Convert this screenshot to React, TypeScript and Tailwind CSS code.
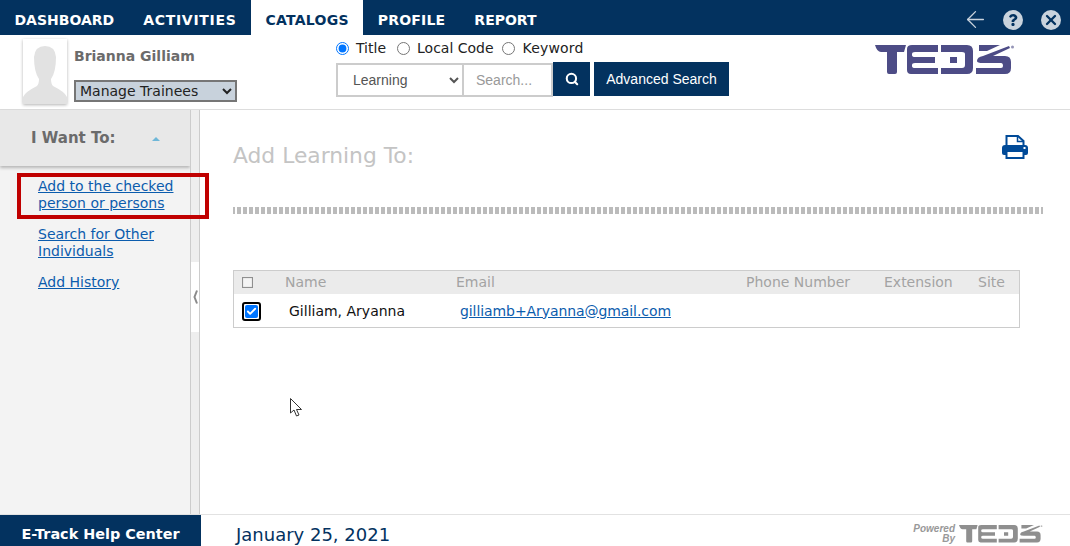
import React from 'react'
import { ArrowLeft, Check, Search, X } from 'lucide-react'
import { FaQuestion } from 'react-icons/fa'

const tabs = [
  { label: 'DASHBOARD', spacing: 'tracking-normal' },
  { label: 'ACTIVITIES', spacing: 'tracking-[0.7px]' },
  { label: 'CATALOGS', spacing: 'tracking-[0.25px]' },
  { label: 'PROFILE', spacing: 'tracking-[0.2px]' },
  { label: 'REPORT', spacing: 'tracking-normal' },
]

function TedsLogo({ className, fill }: { className: string; fill: string }) {
  return (
    <svg viewBox="0 0 140 30" className={className} fill={fill}>
      {/* T */}
      <path d="M0 0H31L29 7H22V27Q22 29 20 29H14Q12 29 12 27V7H6Q2 7 0 0Z" />
      {/* E */}
      <path d="M37 0H63V7H40Q37 7 37 9V10Q37 12 40 12H60V18H40Q37 18 37 20V21Q37 23 40 23H63V29H36Q32 29 32 25V4Q32 0 37 0Z" />
      {/* D */}
      <path d="M66 0H92Q98 0 98 6V23Q98 29 92 29H66V23H87Q90 23 90 20V9Q90 7 87 7H66ZM75 12H82V18H75Z" />
      {/* S with swoosh */}
      <path d="M102 16Q102 12 108 11L134 1L135 3L118 11H130Q136 11 136 17V23Q136 29 130 29H101V23H126Q128 23 128 21Q128 18 126 18H108Q102 18 102 16ZM104 0H125L112 6H104Z" />
      <circle cx="137.5" cy="2" r="1.5" opacity="0.6" />
    </svg>
  )
}

function PrintIcon() {
  return (
    <svg viewBox="0 0 26 24" className="mr-[15px] mt-[25px] h-[24px] w-[26px]">
      <path d="M4.5 12V1H16L21.5 6V12Z" fill="white" stroke="#004a98" strokeWidth="2" />
      <path d="M15.5 1V6.5H21.5" fill="none" stroke="#004a98" strokeWidth="1.5" />
      <path d="M3 10H23Q26 10 26 13V18Q26 20 24 20H2Q0 20 0 18V13Q0 10 3 10Z" fill="#004a98" />
      <rect x="4.5" y="16" width="17" height="7" fill="white" stroke="#004a98" strokeWidth="2" />
      <rect x="21.5" y="12" width="2" height="2" fill="white" />
    </svg>
  )
}

export default function App() {
  return (
    <div className="relative flex h-[546px] w-[1070px] flex-col overflow-hidden bg-white font-['DejaVu_Sans',sans-serif]">
      {/* Top nav */}
      <div className="flex h-[35px] shrink-0 items-stretch bg-[#03325f]">
        <div className="flex">
          {tabs.map((t) => (
            <div
              key={t.label}
              className={`flex items-center px-[14.5px] pt-[6px] text-[14px] font-bold ${t.spacing} ${
                t.label === 'CATALOGS' ? 'bg-white text-[#03325f]' : 'text-white'
              }`}
            >
              {t.label}
            </div>
          ))}
        </div>
        <div className="ml-auto flex items-center gap-[18px] pr-[9px] pt-[4px]">
          <ArrowLeft className="-mr-[4px] h-[27px] w-[27px] text-[#c9d3dd]" strokeWidth={1.2} />
          <div className="flex h-5 w-5 items-center justify-center rounded-full bg-[#c9d3dd]">
            <FaQuestion className="h-3 w-3 text-[#03325f]" />
          </div>
          <div className="flex h-5 w-5 items-center justify-center rounded-full bg-[#c9d3dd]">
            <X className="h-4 w-4 text-[#03325f]" strokeWidth={3.5} />
          </div>
        </div>
      </div>

      {/* Header */}
      <div className="flex h-[75px] shrink-0 border-b border-[#dddddd]">
        <div className="ml-[23px] mt-[4px] h-[65px] w-[44px] shrink-0 overflow-hidden bg-white shadow-[0_1px_3px_rgba(0,0,0,0.3)]">
          <svg viewBox="0 0 44 65" className="h-full w-full" fill="#e2e2e2">
            <path d="M0 65V58Q2 53 14 47Q16 45 16 40Q11 33 11 18Q12 7 22 7Q32 7 33 18Q33 33 28 40Q28 45 30 47Q42 53 44 58V65Z" />
          </svg>
        </div>
        <div className="ml-[7px] w-[163px] shrink-0">
          <div className="mt-[12px] text-[14px] font-bold leading-[18px] text-[#6b6b6b]">Brianna Gilliam</div>
          <select
            defaultValue="Manage Trainees"
            className="mt-[15px] h-[22px] w-[163px] border-2 border-[#767676] bg-[#c8d2dc] text-[14px] text-[#222222]"
          >
            <option>Manage Trainees</option>
          </select>
        </div>
        <div className="ml-[99px] w-[400px] shrink-0">
          <div className="mt-[3px] flex h-[20px] items-center text-[14px] text-[#222222]">
            <input type="radio" name="scope" defaultChecked className="h-[13px] w-[13px]" />
            <span className="ml-[7px]">Title</span>
            <input type="radio" name="scope" className="ml-[11px] h-[13px] w-[13px]" />
            <span className="ml-[7px]">Local Code</span>
            <input type="radio" name="scope" className="ml-[8px] h-[13px] w-[13px]" />
            <span className="ml-[8px] tracking-[0.15px]">Keyword</span>
          </div>
          <div className="mt-[4px] flex h-[35px] items-start font-['Liberation_Sans',sans-serif]">
            <select
              defaultValue="Learning"
              className="mt-[1px] h-[34px] w-[128px] border-2 border-[#cccccc] bg-white pl-[11px] text-[14px] text-[#555555]"
            >
              <option>Learning</option>
            </select>
            <input
              placeholder="Search..."
              className="mt-[1px] h-[34px] w-[89px] border-2 border-l-0 border-[#cccccc] pl-[12px] text-[14px] placeholder:text-[#999999]"
            />
            <button className="flex h-[34px] w-[37px] items-center justify-center bg-[#03325f]">
              <Search className="h-[14px] w-[14px] text-white" strokeWidth={3.5} />
            </button>
            <button className="ml-[4px] h-[34px] w-[135px] bg-[#03325f] text-[14px] text-white">Advanced Search</button>
          </div>
        </div>
        <div className="ml-[139px] mt-[10px]">
          <TedsLogo className="h-[30px] w-[140px]" fill="#4d4c86" />
        </div>
      </div>

      {/* Body */}
      <div className="flex min-h-0 flex-1">
        <div className="w-[190px] shrink-0 bg-[#f3f3f3]">
          <div className="flex h-[56px] items-center bg-[#e8e8e8] pl-[31px] pt-[1px] shadow-[0_2px_3px_rgba(0,0,0,0.25)]">
            <span className="text-[15px] font-bold text-[#6b6b6b]">I Want To:</span>
            <span className="ml-[36px] h-0 w-0 border-x-[4px] border-b-[4px] border-x-transparent border-b-[#6fb7d8]" />
          </div>
          <div className="flex flex-col gap-[14px] pl-[38px] pt-[12px] text-[14px] leading-[17px] text-[#0b5cad]">
            <a className="underline">Add to the checked<br />person or persons</a>
            <a className="underline">Search for Other<br />Individuals</a>
            <a className="underline">Add History</a>
          </div>
        </div>

        {/* Splitter */}
        <div className="flex w-[10px] shrink-0 flex-col border-x border-[#cccccc] bg-[#eeeeee]">
          <div className="mt-[152px] flex h-[70px] items-center justify-center bg-white">
            <svg viewBox="0 0 5 14" className="h-[14px] w-[5px]" fill="none" stroke="#8a8a8a" strokeWidth="2">
              <path d="M4 0.5L1.5 7L4 13.5" />
            </svg>
          </div>
        </div>

        {/* Main */}
        <div className="min-w-0 flex-1 pl-[33px]">
          <div className="flex h-[97px] w-[810px] items-start justify-between">
            <div className="mt-[33px] text-[21.8px] leading-[26px] text-[#c4c4c4]">Add Learning To:</div>
            <PrintIcon />
          </div>
          <div className="h-[7px] w-[810px] bg-[repeating-linear-gradient(90deg,#bbbbbb_0_2px,transparent_2px_4px,#bbbbbb_4px_6px)]" />
          <div className="mt-[56px] w-[787px] border border-[#cccccc] text-[14px]">
            <div className="flex h-[23px] items-center bg-[#ebebeb] text-[#a3a3a3]">
              <div className="ml-[8px] h-[11px] w-[11px] border border-[#8f8f8f] bg-[#f4f4f4] shadow-[inset_0_0_1px_#999]" />
              <span className="ml-[32px] w-[171px]">Name</span>
              <span className="w-[290px]">Email</span>
              <span className="w-[138px]">Phone Number</span>
              <span className="w-[94px]">Extension</span>
              <span>Site</span>
            </div>
            <div className="flex h-[33px] items-center pt-[1px]">
              <div className="ml-[8px] flex h-[19px] w-[19px] items-center justify-center rounded-[3px] border-2 border-black bg-white">
                <div className="flex h-[13px] w-[13px] items-center justify-center rounded-[2px] bg-[#0075ff]">
                  <Check className="h-[11px] w-[11px] text-white" strokeWidth={4} />
                </div>
              </div>
              <span className="ml-[28px] w-[171px] text-[#111111]">Gilliam, Aryanna</span>
              <a className="tracking-[-0.08px] text-[#0b5cad] underline">gilliamb+Aryanna@gmail.com</a>
            </div>
          </div>
        </div>
      </div>

      {/* Footer */}
      <div className="flex h-[32px] shrink-0 border-t border-[#e2e2e2]">
        <div className="flex w-[201px] items-center justify-center bg-[#03325f] pt-[8px] text-[14.4px] font-bold text-white">
          E-Track Help Center
        </div>
        <div className="ml-[35px] flex items-center pt-[8px] text-[18px] text-[#03325f]">January 25, 2021</div>
        <div className="ml-auto mr-[26px] flex items-center gap-[3px] pt-[6px]">
          <div className="text-right font-['Liberation_Sans',sans-serif] text-[10px] font-bold italic leading-[10px] text-[#999999]">
            Powered<br />By
          </div>
          <TedsLogo className="h-[18px] w-[86px]" fill="#8f8f8f" />
        </div>
      </div>

      {/* Red annotation box */}
      <div className="absolute left-[17px] top-[173px] h-[46px] w-[192px] border-4 border-[#c00000]" />

      {/* Mouse pointer */}
      <svg viewBox="0 0 13 19" className="absolute left-[290px] top-[398px] h-[19px] w-[13px]" fill="white" stroke="#333333" strokeWidth="1">
        <path d="M0.5 0.5V15L4 12L6.5 18L9 17L6.5 11.5H11.5Z" />
      </svg>
    </div>
  )
}
